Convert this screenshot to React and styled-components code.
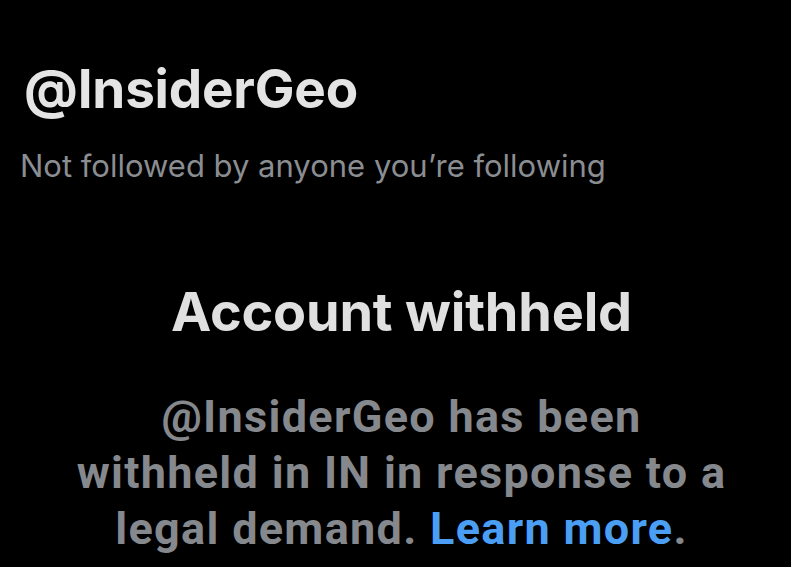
import React from "react";
import styled, { createGlobalStyle } from "styled-components";

const GlobalStyle = createGlobalStyle`
  html, body {
    margin: 0;
    padding: 0;
    background: #000000;
  }
  body {
    font-family: "Inter", "Liberation Sans", sans-serif;
  }
`;

const Screen = styled.div`
  width: 791px;
  height: 567px;
  overflow: hidden;
  background: #000000;
  display: flex;
  flex-direction: column;
`;

const Profile = styled.header`
  display: flex;
  flex-direction: column;
  padding: 57px 0 0 24px;
`;

const Handle = styled.h1`
  margin: 0;
  font-family: "Inter", sans-serif;
  font-weight: 700;
  font-size: 53px;
  line-height: 64px;
  color: #e4e4e4;
  letter-spacing: -0.2px;
`;

const FollowNote = styled.p`
  margin: 26px 0 0 -4px;
  font-family: "Inter", sans-serif;
  font-weight: 400;
  font-size: 31px;
  line-height: 38px;
  color: #8a8d91;
`;

const Notice = styled.section`
  display: flex;
  flex-direction: column;
  align-items: center;
  margin-top: 94px;
  padding-left: 12px;
`;

const NoticeTitle = styled.h2`
  margin: 0;
  font-family: "Inter", sans-serif;
  font-weight: 700;
  font-size: 54px;
  line-height: 66px;
  color: #e0e0e0;
  letter-spacing: -0.2px;
`;

const NoticeText = styled.p`
  margin: 44px 0 0;
  width: 760px;
  text-align: center;
  font-family: "Roboto", sans-serif;
  font-weight: 700;
  font-size: 45px;
  line-height: 56px;
  color: #85888c;
  letter-spacing: 1.3px;
`;

const LearnMore = styled.a`
  color: #4a9ef3;
  text-decoration: none;
`;

export default function App() {
  return (
    <Screen>
      <GlobalStyle />
      <Profile>
        <Handle>@InsiderGeo</Handle>
        <FollowNote>Not followed by anyone you’re following</FollowNote>
      </Profile>
      <Notice>
        <NoticeTitle>Account withheld</NoticeTitle>
        <NoticeText>
          @InsiderGeo has been
          <br />
          withheld in IN in response to a
          <br />
          legal demand. <LearnMore href="#">Learn more</LearnMore>.
        </NoticeText>
      </Notice>
    </Screen>
  );
}
